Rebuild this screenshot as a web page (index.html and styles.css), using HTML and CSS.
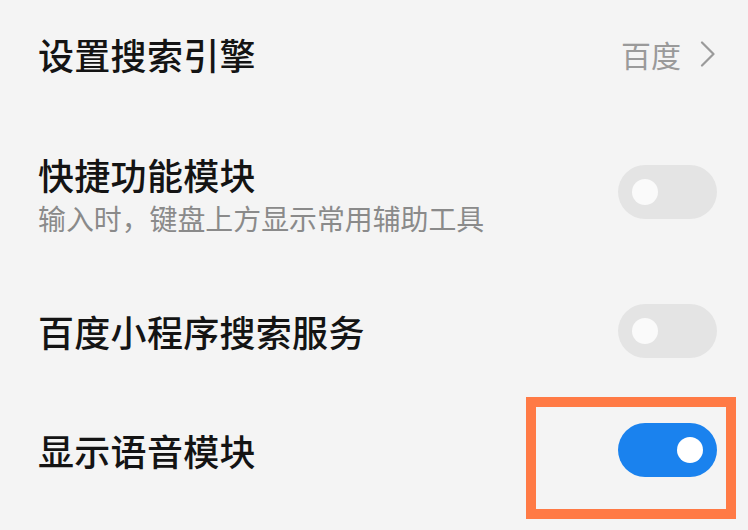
FILE: index.html
```html
<!DOCTYPE html>
<html lang="zh-CN">
<head>
  <meta charset="UTF-8">
  <meta name="viewport" content="width=device-width, initial-scale=1.0">
  <title>键盘设置</title>
  <link rel="stylesheet" href="styles.css">
</head>
<body>
  <div class="settings">
    <div class="row row-engine">
      <div class="label">设置搜索引擎</div>
      <div class="value">
        百度
        <svg class="chevron" width="16" height="26" viewBox="0 0 16 26">
          <path d="M2 1.5 L13.5 13 L2 24.5" fill="none" stroke="#9a9a9a" stroke-width="2.2" stroke-linecap="round" stroke-linejoin="round"/>
        </svg>
      </div>
    </div>

    <div class="row row-quick">
      <div class="text">
        <div class="label">快捷功能模块</div>
        <div class="desc">输入时，键盘上方显示常用辅助工具</div>
      </div>
      <div class="switch"><span class="knob"></span></div>
    </div>

    <div class="row row-mini">
      <div class="label">百度小程序搜索服务</div>
      <div class="switch"><span class="knob"></span></div>
    </div>

    <div class="row row-voice">
      <div class="label">显示语音模块</div>
      <div class="switch on"><span class="knob"></span></div>
      <div class="highlight"></div>
    </div>
  </div>
</body>
</html>
```

FILE: styles.css
```css
html, body {
  margin: 0;
  padding: 0;
}
body {
  width: 748px;
  height: 530px;
  overflow: hidden;
  background-color: #f4f4f4;
  font-family: "Noto Sans CJK SC", "Noto Sans", sans-serif;
  color: #141414;
}
.settings {
  display: flex;
  flex-direction: column;
  padding: 0 31px 0 38px;
}
.row {
  position: relative;
  display: flex;
  align-items: center;
  justify-content: space-between;
}
.row-engine {
  height: 108px;
}
.row-quick {
  height: 168px;
}
.row-mini {
  height: 110px;
}
.row-voice {
  height: 128px;
}
.label {
  font-size: 36px;
  font-weight: 500;
  line-height: 44px;
  letter-spacing: 0.3px;
}
.row-quick .text {
  margin-top: 4px;
}
.desc {
  margin-top: 4px;
  font-size: 27.9px;
  line-height: 36px;
  color: #8a8a8a;
}
.value {
  display: flex;
  align-items: center;
  gap: 19px;
  font-size: 30px;
  color: #9a9a9a;
  margin-right: 1px;
}
.switch {
  position: relative;
  width: 99px;
  height: 54px;
  border-radius: 27px;
  background-color: #e4e4e4;
}
.knob {
  position: absolute;
  top: 14px;
  left: 14px;
  width: 26px;
  height: 26px;
  border-radius: 50%;
  background-color: #fafafa;
}
.switch.on {
  background-color: #1a82ee;
}
.switch.on .knob {
  left: auto;
  right: 14px;
  background-color: #fff;
}
.highlight {
  position: absolute;
  right: -19px;
  top: 11px;
  width: 190px;
  height: 102px;
  border: 10px solid #ff7a45;
}
```
